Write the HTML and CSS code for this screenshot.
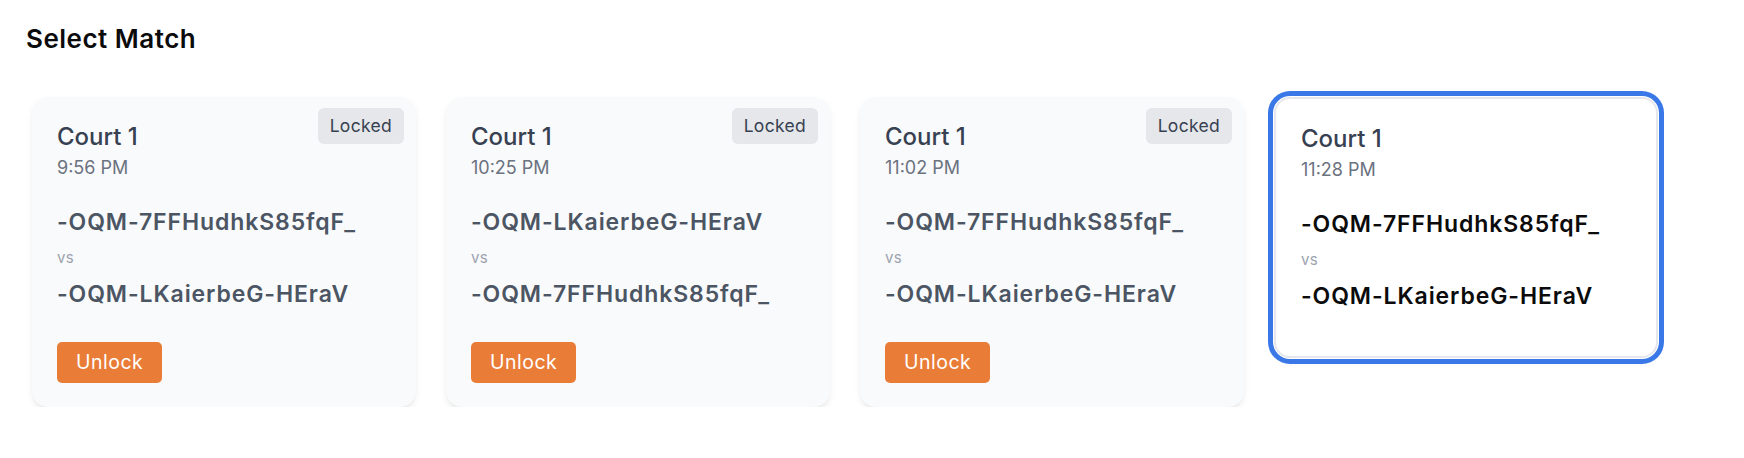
FILE: index.html
```html
<!DOCTYPE html>
<html lang="en">
<head>
<meta charset="utf-8">
<title>Select Match</title>
<link rel="stylesheet" href="styles.css">
</head>
<body>
<main class="page">
  <h1 class="title">Select Match</h1>
  <div class="grid">
    <div class="card">
      <span class="badge">Locked</span>
      <div class="court">Court 1</div>
      <div class="time">9:56 PM</div>
      <div class="players">
        <div class="player">-OQM-7FFHudhkS85fqF_</div>
        <div class="vs">vs</div>
        <div class="player">-OQM-LKaierbeG-HEraV</div>
      </div>
      <button class="unlock">Unlock</button>
    </div>
    <div class="card">
      <span class="badge">Locked</span>
      <div class="court">Court 1</div>
      <div class="time">10:25 PM</div>
      <div class="players">
        <div class="player">-OQM-LKaierbeG-HEraV</div>
        <div class="vs">vs</div>
        <div class="player">-OQM-7FFHudhkS85fqF_</div>
      </div>
      <button class="unlock">Unlock</button>
    </div>
    <div class="card">
      <span class="badge">Locked</span>
      <div class="court">Court 1</div>
      <div class="time">11:02 PM</div>
      <div class="players">
        <div class="player">-OQM-7FFHudhkS85fqF_</div>
        <div class="vs">vs</div>
        <div class="player">-OQM-LKaierbeG-HEraV</div>
      </div>
      <button class="unlock">Unlock</button>
    </div>
    <div class="card card-selected">
      <div class="court">Court 1</div>
      <div class="time">11:28 PM</div>
      <div class="players">
        <div class="player">-OQM-7FFHudhkS85fqF_</div>
        <div class="vs">vs</div>
        <div class="player">-OQM-LKaierbeG-HEraV</div>
      </div>
    </div>
  </div>
</main>
</body>
</html>
```

FILE: styles.css
```css
* {
  box-sizing: border-box;
}

html, body {
  margin: 0;
  padding: 0;
  background: #ffffff;
}

body {
  font-family: Inter, "Noto Sans", "Liberation Sans", sans-serif;
  color: #111827;
}

.page {
  padding: 23px 0 0 0;
}

.title {
  margin: 0 0 42px 26px;
  font-size: 26px;
  line-height: 32px;
  font-weight: 600;
  letter-spacing: 0.5px;
  color: #0b0b0c;
}

.grid {
  display: grid;
  grid-template-columns: repeat(4, 384px);
  column-gap: 30px;
  align-items: start;
  padding-left: 32px;
}

.card {
  position: relative;
  background: #f9fafb;
  border-radius: 16px;
  padding: 24px 24px 24px 25px;
  box-shadow: 0 4px 8px -2px rgba(0, 0, 0, 0.10), 0 2px 4px -2px rgba(0, 0, 0, 0.06);
}

.card-selected {
  background: #ffffff;
  border: 2px solid #e5e7eb;
  padding: 24px 24px 24px 25px;
  box-shadow: 0 0 0 1px #ffffff, 0 0 0 6px #3b78e7, 0 6px 10px -2px rgba(0, 0, 0, 0.06);
}

.badge {
  position: absolute;
  top: 11px;
  right: 12px;
  background: #e5e7eb;
  color: #374151;
  font-size: 17.5px;
  line-height: 24px;
  letter-spacing: 0.3px;
  padding: 6px 12px;
  border-radius: 6px;
}

.court {
  font-size: 24px;
  line-height: 32px;
  font-weight: 500;
  color: #374151;
}

.time {
  margin-top: 3px;
  font-size: 18px;
  line-height: 24px;
  color: #6b7280;
}

.players {
  margin-top: 26px;
  margin-bottom: 20px;
}

.player {
  font-size: 23px;
  line-height: 32px;
  font-weight: 600;
  letter-spacing: 0.9px;
  color: #4b5563;
}

.card-selected .player {
  color: #0b0b0c;
}

.vs {
  font-size: 15px;
  line-height: 40px;
  letter-spacing: 0.3px;
  color: #9ca3af;
}

.unlock {
  display: block;
  margin-top: 32px;
  font-family: inherit;
  font-size: 19.5px;
  line-height: 29px;
  letter-spacing: 0.5px;
  padding: 6px 19px;
  color: #ffffff;
  background: #e97d38;
  border: none;
  border-radius: 5px;
}
```
